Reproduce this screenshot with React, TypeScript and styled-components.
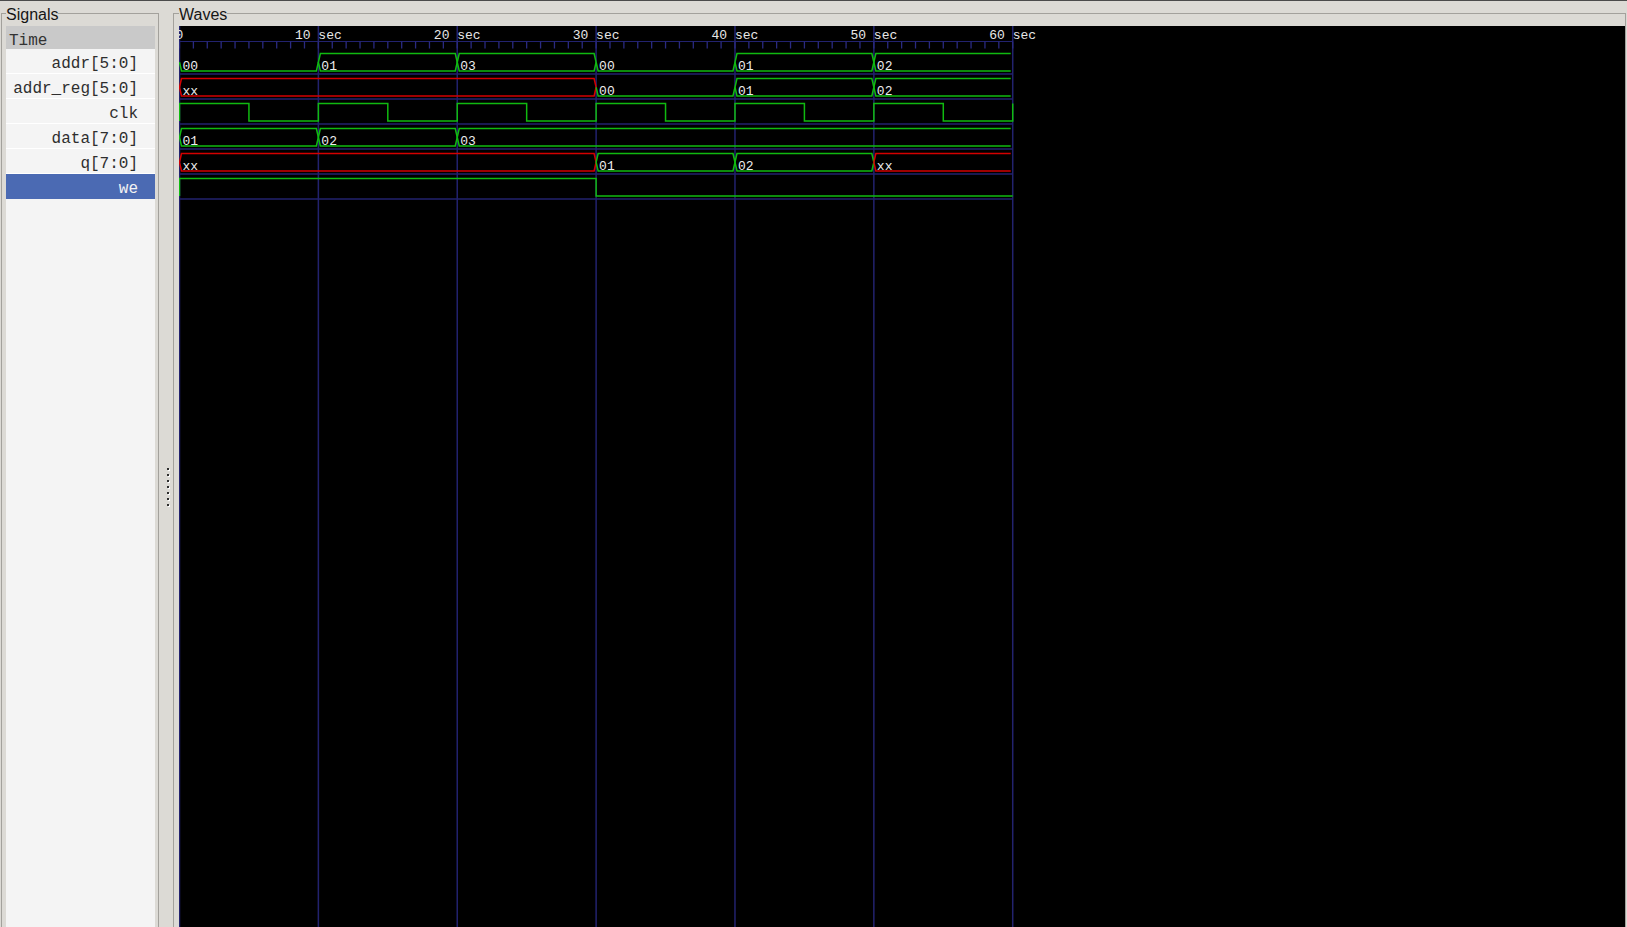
import React from "react";
import styled, { createGlobalStyle } from "styled-components";

const GlobalStyle = createGlobalStyle`
  html, body { margin: 0; padding: 0; background: #dcdad5; overflow: hidden; }
  * { box-sizing: border-box; }
`;

const Root = styled.div`
  width: 1627px;
  height: 927px;
  border-top: 1px solid #4b4b4b;
  display: flex;
  align-items: flex-start;
  overflow: hidden;
  background: #dcdad5;
`;

const Frame = styled.fieldset<{ $width: number; $ml: number; $pl: number; $pr: number }>`
  margin: 1px 0 0 ${(p) => p.$ml}px;
  width: ${(p) => p.$width}px;
  height: 960px;
  min-width: 0;
  flex: none;
  border: 1px solid #a3a19c;
  border-bottom: none;
  padding: 2px ${(p) => p.$pr}px 0 ${(p) => p.$pl}px;
  display: flex;
  flex-direction: column;
`;

const Legend = styled.legend`
  padding: 4px 0 0 0;
  font-family: "Liberation Sans", Arial, sans-serif;
  font-size: 16px;
  line-height: 18px;
  color: #151515;
`;

const SignalList = styled.div`
  flex: 1;
  background: #f4f4f4;
  display: flex;
  flex-direction: column;
`;

const TimeHeader = styled.div`
  height: 23px;
  background: #c9c9c9;
  font-family: "Liberation Mono", "Courier New", monospace;
  font-size: 16px;
  line-height: 23px;
  padding-top: 4px;
  color: #333;
  padding-left: 3px;
  overflow: visible;
`;

const SignalRow = styled.div<{ $selected?: boolean }>`
  height: 25px;
  border-bottom: 1px solid ${(p) => (p.$selected ? "#4b6ab3" : "#ffffff")};
  background: ${(p) => (p.$selected ? "#4b6ab3" : "transparent")};
  color: ${(p) => (p.$selected ? "#f2f2f2" : "#2e2e2e")};
  font-family: "Liberation Mono", "Courier New", monospace;
  font-size: 16px;
  line-height: 22px;
  padding-top: 4px;
  text-align: right;
  padding-right: 17px;
  white-space: pre;
`;

const Paned = styled.div`
  width: 14px;
  height: 927px;
  flex: none;
  display: flex;
  flex-direction: column;
  align-items: center;
  justify-content: center;
  gap: 4px;
  padding-top: 44px;
  padding-left: 4px;
`;

const GripDot = styled.span`
  width: 2px;
  height: 2px;
  background: #2e2e2e;
  box-shadow: 1px 1px 0 #ffffff;
`;

const WaveCanvas = styled.div`
  flex: 1;
  background: #000;
  overflow: hidden;
`;

const WaveSvg = styled.svg`
  display: block;
`;

const RulerText = styled.text`
  font-family: "Liberation Mono", "Courier New", monospace;
  font-size: 13px;
  fill: #e8e8e8;
`;

const ValueText = styled.text`
  font-family: "Liberation Mono", "Courier New", monospace;
  font-size: 13px;
  fill: #ededed;
`;

type Seg = [number, number, string];
type Row =
  | { name: string; kind: "bus"; segs: Seg[] }
  | { name: string; kind: "clk" }
  | { name: string; kind: "bit"; changes: [number, number][] };

const rows: Row[] = [
  { name: "addr[5:0]", kind: "bus", segs: [[0, 10, "00"], [10, 20, "01"], [20, 30, "03"], [30, 40, "00"], [40, 50, "01"], [50, 60, "02"]] },
  { name: "addr_reg[5:0]", kind: "bus", segs: [[0, 30, "xx"], [30, 40, "00"], [40, 50, "01"], [50, 60, "02"]] },
  { name: "clk", kind: "clk" },
  { name: "data[7:0]", kind: "bus", segs: [[0, 10, "01"], [10, 20, "02"], [20, 60, "03"]] },
  { name: "q[7:0]", kind: "bus", segs: [[0, 30, "xx"], [30, 40, "01"], [40, 50, "02"], [50, 60, "xx"]] },
  { name: "we", kind: "bit", changes: [[0, 1], [30, 0]] },
];

const T_END = 60;
const PX = 13.887;
const X0 = 0.5;
const tx = (t: number) => X0 + t * PX;
const ROW_TOP = 23;
const ROW_H = 25;
const GREEN = "#10ba10";
const RED = "#d40000";
const GRID = "#22226e";
const W = 1446;
const H = 901;

function busPath(xa: number, xb: number, top: number, zero: boolean, open: boolean) {
  const hi = top + 4.5;
  const lo = top + 22;
  const mid = top + 13.25;
  const d = 2;
  if (zero) {
    return `M${xa} ${mid} L${xa + d} ${lo} L${xb - d} ${lo}` + (open ? "" : ` L${xb} ${mid}`);
  }
  if (open) {
    return `M${xb - d} ${hi} L${xa + d} ${hi} L${xa} ${mid} L${xa + d} ${lo} L${xb - d} ${lo}`;
  }
  return `M${xa + d} ${hi} L${xa} ${mid} L${xa + d} ${lo} L${xb - d} ${lo} L${xb} ${mid} L${xb - d} ${hi} Z`;
}

function Waves() {
  const els: React.ReactNode[] = [];
  for (let t = 0; t <= T_END; t += 10) {
    els.push(<line key={`g${t}`} x1={tx(t)} x2={tx(t)} y1={0} y2={H} stroke={GRID} strokeWidth={1.5} />);
  }
  els.push(<line key="rl" x1={0} x2={tx(T_END)} y1={15.5} y2={15.5} stroke={GRID} strokeWidth={1.2} />);
  for (let t = 0; t <= T_END; t += 1) {
    els.push(<line key={`tk${t}`} x1={tx(t)} x2={tx(t)} y1={15.5} y2={22.5} stroke="#2a2a80" strokeWidth={1.3} />);
  }
  for (let t = 0; t <= T_END; t += 10) {
    els.push(
      <RulerText key={`rt${t}`} x={tx(t)} y={12.5} textAnchor="middle" xmlSpace="preserve">
        {t === 0 ? "0" : `${t} sec`}
      </RulerText>
    );
  }
  rows.forEach((row, i) => {
    const top = ROW_TOP + i * ROW_H;
    const hi = top + 4.5;
    const lo = top + 22;
    els.push(
      <line key={`sep${i}`} x1={0} x2={tx(T_END)} y1={top + 25} y2={top + 25} stroke={GRID} strokeWidth={1.5} />
    );
    if (row.kind === "bus") {
      row.segs.forEach(([a, b, v], j) => {
        const xa = tx(a);
        const xb = tx(b);
        const color = v === "xx" ? RED : GREEN;
        els.push(
          <path key={`b${i}-${j}`} d={busPath(xa, xb, top, v === "00", b === T_END)} fill="none" stroke={color} strokeWidth={1.5} />
        );
        els.push(
          <ValueText key={`v${i}-${j}`} x={xa + 3} y={top + 20.5}>
            {v}
          </ValueText>
        );
      });
    } else if (row.kind === "clk") {
      let d = `M${tx(0)} ${lo}`;
      for (let t = 0; t < T_END; t += 10) {
        d += ` L${tx(t)} ${hi} L${tx(t + 5)} ${hi} L${tx(t + 5)} ${lo} L${tx(t + 10)} ${lo}`;
      }
      d += ` L${tx(T_END)} ${hi}`;
      els.push(<path key={`c${i}`} d={d} fill="none" stroke={GREEN} strokeWidth={1.5} />);
    } else {
      let d = `M${tx(0)} ${lo}`;
      let cur = 0;
      row.changes.forEach(([t, v]) => {
        const y = cur ? hi : lo;
        d += ` L${tx(t)} ${y} L${tx(t)} ${v ? hi : lo}`;
        cur = v;
      });
      d += ` L${tx(T_END)} ${cur ? hi : lo}`;
      els.push(<path key={`w${i}`} d={d} fill="none" stroke={GREEN} strokeWidth={1.5} />);
    }
  });
  return (
    <WaveSvg width={W} height={H} viewBox={`0 0 ${W} ${H}`}>
      {els}
    </WaveSvg>
  );
}

export default function App() {
  return (
    <>
      <GlobalStyle />
      <Root>
        <Frame $width={158} $ml={1} $pl={4} $pr={3}>
          <Legend>Signals</Legend>
          <SignalList>
            <TimeHeader>Time</TimeHeader>
            {rows.map((r) => (
              <SignalRow key={r.name} $selected={r.name === "we"}>
                {r.name}
              </SignalRow>
            ))}
          </SignalList>
        </Frame>
        <Paned>
          {Array.from({ length: 7 }).map((_, i) => (
            <GripDot key={i} />
          ))}
        </Paned>
        <Frame $width={1453} $ml={0} $pl={5} $pr={0}>
          <Legend>Waves</Legend>
          <WaveCanvas>
            <Waves />
          </WaveCanvas>
        </Frame>
      </Root>
    </>
  );
}
